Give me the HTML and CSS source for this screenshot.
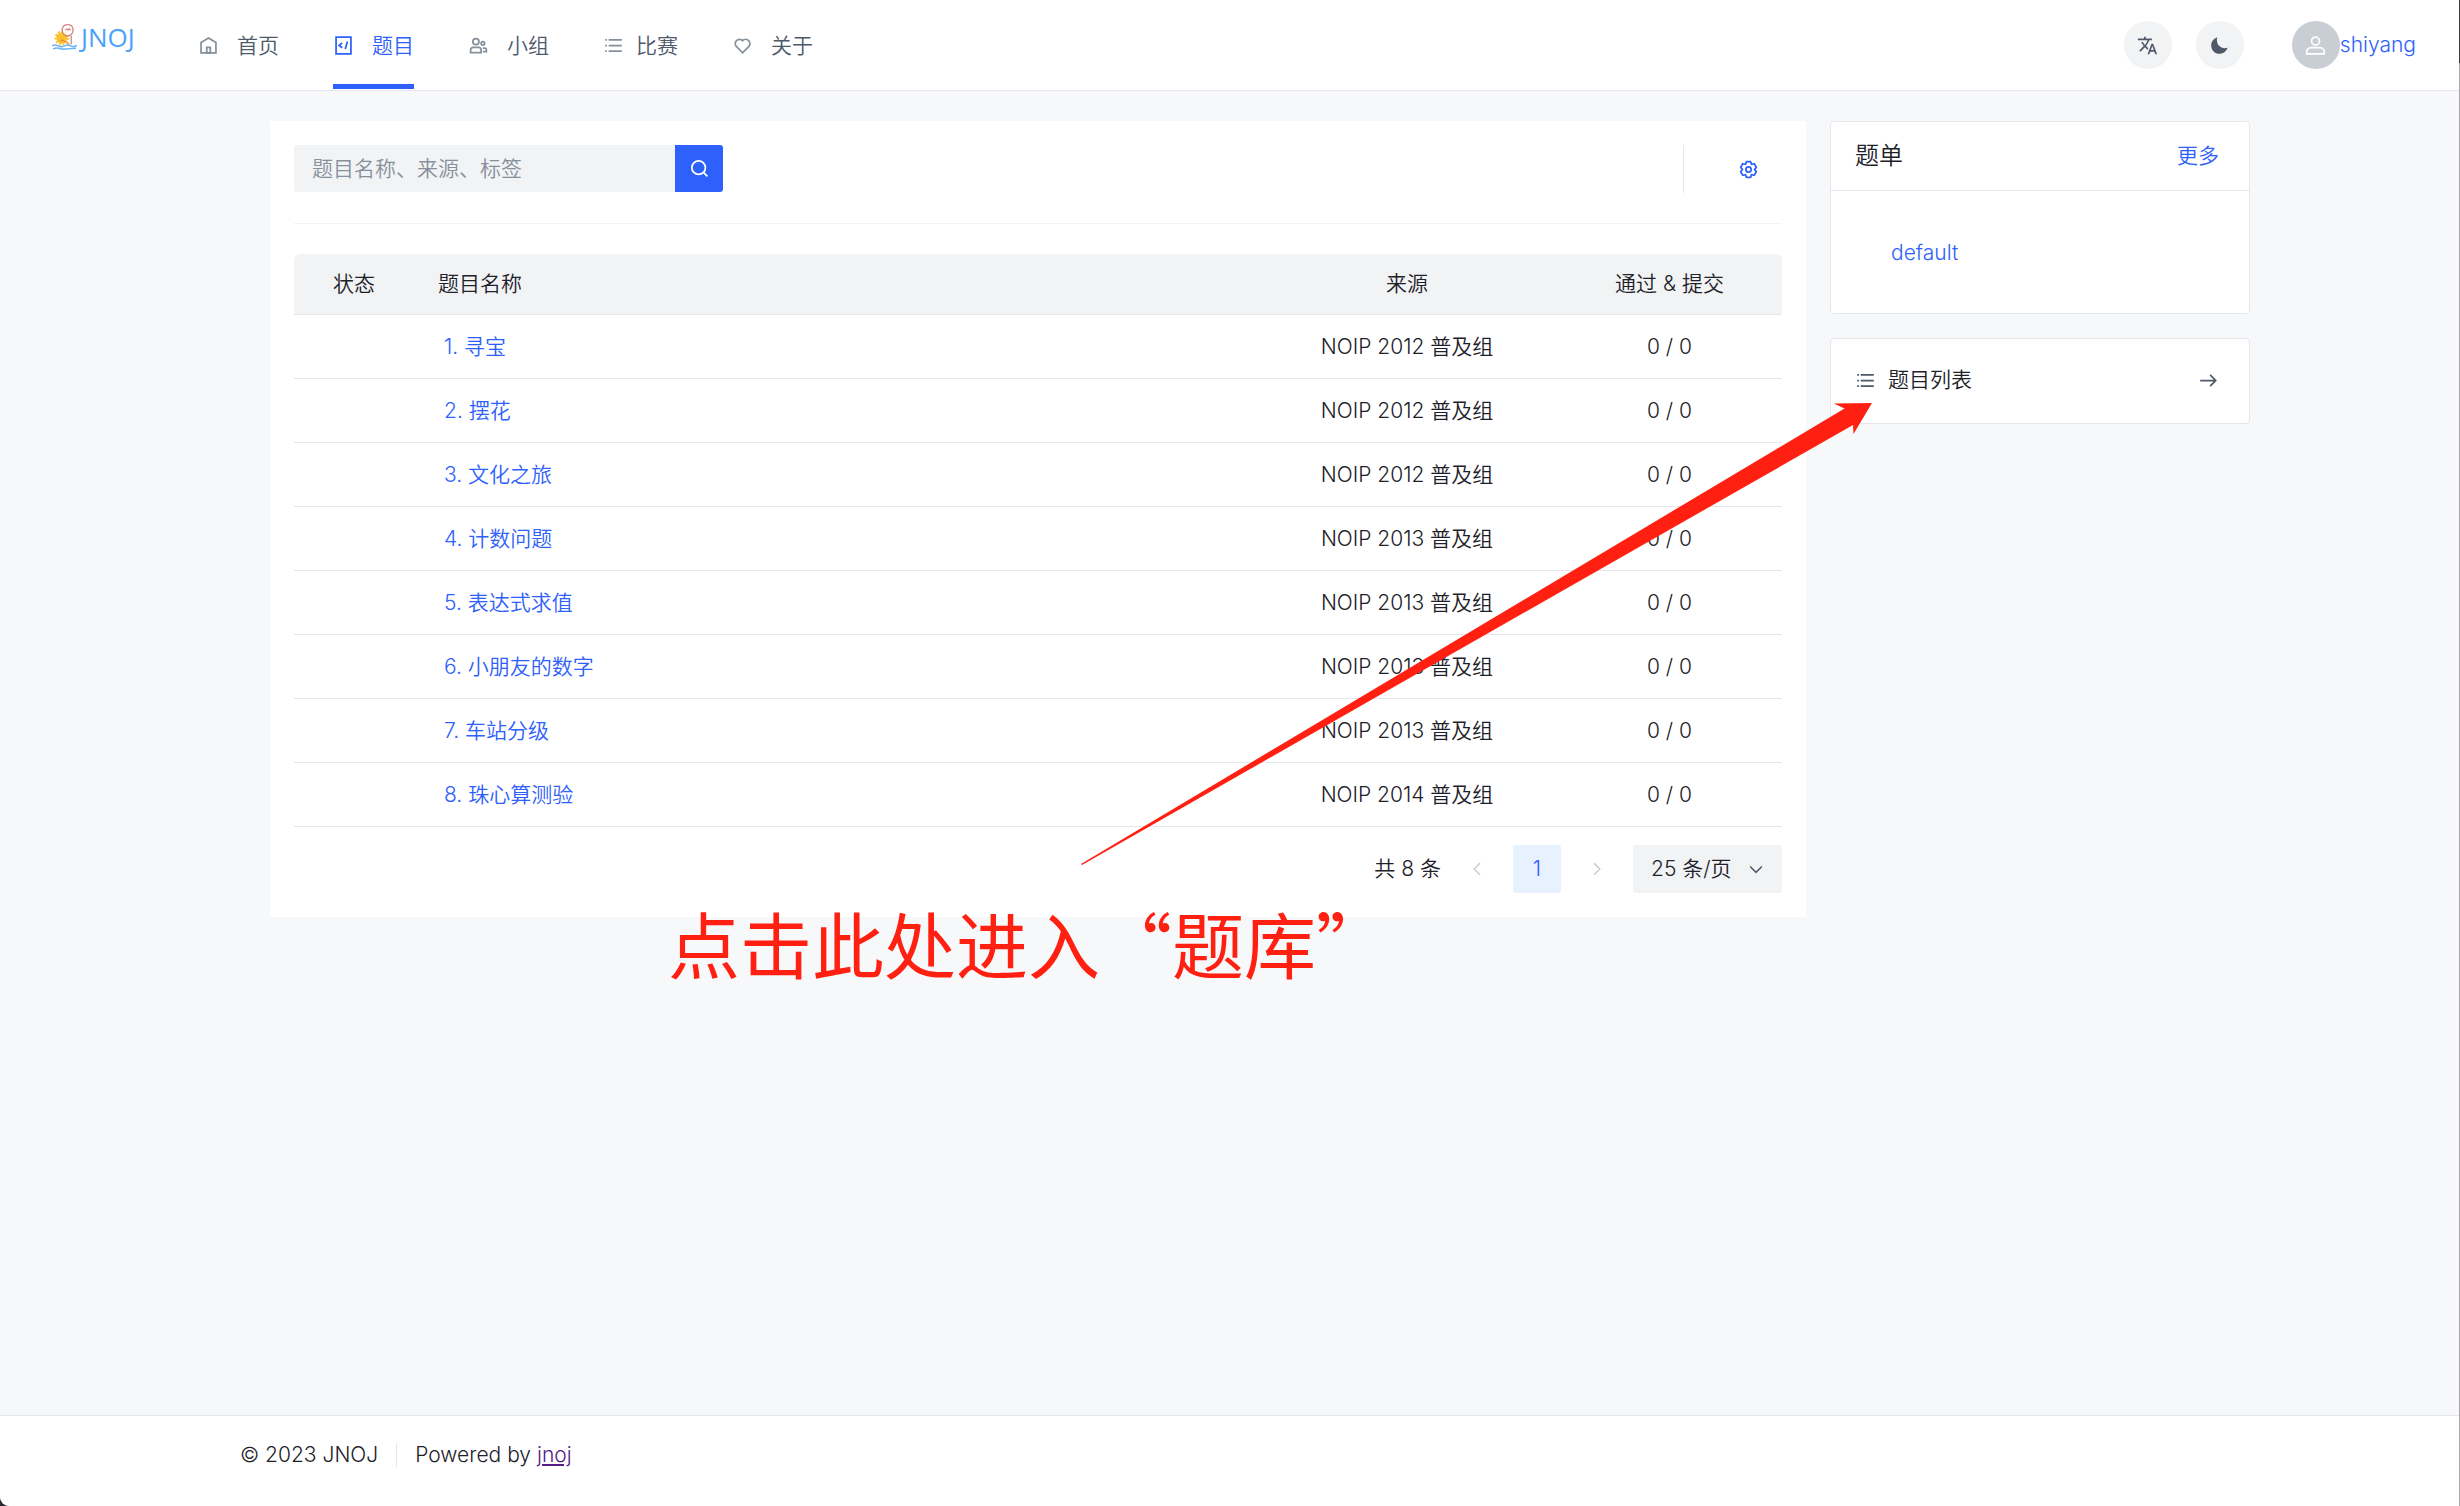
FILE: index.html
```html
<!DOCTYPE html>
<html lang="zh-CN">
<head>
<meta charset="utf-8">
<meta name="viewport" content="width=device-width, initial-scale=1">
<title>题目 - JNOJ</title>
<link rel="stylesheet" href="styles.css">
</head>
<body>
<svg class="sprite" aria-hidden="true">
  <symbol id="i-list" viewBox="0 0 48 48"><path d="M13 24h30M5 11h4m4 26h30M13 11h30M5 24h4M5 37h4"/></symbol>
  <symbol id="i-chev-l" viewBox="0 0 48 48"><path d="M32 8.400 16.444 23.956 32 39.513"/></symbol>
  <symbol id="i-chev-r" viewBox="0 0 48 48"><path d="m16 39.513 15.556-15.557L16 8.400"/></symbol>
</svg>
<header class="topbar">
  <a class="logo" href="#" aria-label="JNOJ">
    <svg class="logo-mark" viewBox="0 0 24 26" aria-hidden="true">
      <circle cx="9.500" cy="14" r="5.500" fill="#f9c22e"/>
      <circle cx="9.500" cy="14" r="6.200" fill="none" stroke="#f9c22e" stroke-width="1.600" stroke-dasharray="2 1.500"/>
      <path d="M10 8c-1-4 1-7 5-7s6 3 5 7c-1 3-3 4-5 4s-4-1-5-4zM18.500 12v8" fill="#fff" fill-opacity=".7" stroke="#d4827c" stroke-width="1.200"/>
      <path d="M12.500 6.500l2-1.500 1 1.500 1-1.500 1.500 1.500" fill="none" stroke="#d4827c"/>
      <path d="M8 17q2-2 4 0l5 3" fill="none" stroke="#e8913c" stroke-width="1.200"/>
      <path d="M0 21.500q3-1.500 6 0t6 0 6 0 6-.5M1 24.500q3-1.500 6-.5t6 .5 6-.5 4-.5" fill="none" stroke="#6bb5f3" stroke-width="1.500"/>
    </svg>
    <span class="logo-text">JNOJ</span>
  </a>
  <nav class="menu">
    <a href="#"><svg class="icon" viewBox="0 0 48 48"><path d="M7 17 24 7l17 10v24H7V17Z"/><path d="M20 28h8v13h-8V28Z"/></svg>首页</a>
    <a href="#" class="active"><svg class="icon" viewBox="0 0 48 48"><path d="M7 5h34v38H7z"/><path d="m21 18-7 6 7 5M33 15l-5 17M33 15l-5 17"/></svg>题目</a>
    <a href="#"><svg class="icon" viewBox="0 0 48 48"><circle cx="18" cy="15" r="7"/><circle cx="34" cy="19" r="4"/><path d="M6 34a6 6 0 0 1 6-6h12a6 6 0 0 1 6 6v6H6v-6ZM34 30h4a4 4 0 0 1 4 4v4h-8"/></svg>小组</a>
    <a href="#" class="tight"><svg class="icon"><use href="#i-list"/></svg>比赛</a>
    <a href="#"><svg class="icon" viewBox="0 0 48 48"><path d="M38.083 12.912a9.802 9.802 0 0 1 0 13.861l-1.732 1.733L24.228 40.630 12.100 28.500l-1.730-1.730A9.802 9.802 0 1 1 24.232 12.912a9.800 9.800 0 0 1 13.851 0Z"/></svg>关于</a>
  </nav>
  <div class="tools">
    <button class="round" type="button" aria-label="语言"><svg class="icon solid" viewBox="0 0 24 24"><path d="M12.870 15.070l-2.540-2.510.03-.03A17.520 17.520 0 0 0 14.070 6H17V4h-7V2H8v2H1v2h11.170C11.500 7.920 10.440 9.750 9 11.350 8.070 10.320 7.300 9.190 6.690 8h-2c.73 1.630 1.730 3.170 2.980 4.560l-5.090 5.020L4 19l5-5 3.110 3.110.76-2.040zM18.500 10h-2L12 22h2l1.120-3h4.750L21 22h2l-4.500-12zm-2.620 7l1.620-4.330L19.120 17h-3.240z"/></svg></button>
    <button class="round" type="button" aria-label="深色模式"><svg class="icon solid" viewBox="0 0 48 48"><path d="M42.108 29.769c.124-.387-.258-.736-.645-.613A17.990 17.990 0 0 1 36 30c-9.941 0-18-8.059-18-18 0-1.904.296-3.740.844-5.463.123-.387-.226-.768-.613-.645C10.558 8.334 5 15.518 5 24c0 10.493 8.507 19 19 19 8.482 0 15.666-5.558 18.108-13.231Z"/></svg></button>
    <a class="user" href="#"><span class="avatar"><svg class="icon" viewBox="0 0 48 48"><circle cx="24" cy="14" r="9"/><path d="M4 39a10 10 0 0 1 10-10h20a10 10 0 0 1 10 10v4H4v-4Z"/></svg></span>shiyang</a>
  </div>
</header>
<main class="page">
  <section class="panel">
    <div class="bar">
      <form class="search">
        <input type="search" aria-label="搜索题目" placeholder="题目名称、来源、标签">
        <button type="button" aria-label="搜索"><svg class="icon" viewBox="0 0 48 48"><circle cx="22" cy="22" r="15.500"/><path d="m33 33 9 9"/></svg></button>
      </form>
      <div class="settings"><button type="button" aria-label="设置"><svg class="icon" viewBox="0 0 48 48"><path d="M18.797 6.732A1 1 0 0 1 19.760 6h8.480a1 1 0 0 1 .964.732l1.285 4.628a1 1 0 0 0 1.213.700l4.651-1.200a1 1 0 0 1 1.116.468l4.240 7.344a1 1 0 0 1-.153 1.200L38.193 23.300a1 1 0 0 0 0 1.402l3.364 3.427a1 1 0 0 1 .153 1.200l-4.240 7.344a1 1 0 0 1-1.116.468l-4.650-1.200a1 1 0 0 0-1.214.700l-1.285 4.628a1 1 0 0 1-.964.732h-8.480a1 1 0 0 1-.963-.732L17.510 36.640a1 1 0 0 0-1.213-.700l-4.650 1.200a1 1 0 0 1-1.116-.468l-4.240-7.344a1 1 0 0 1 .153-1.200L9.809 24.700a1 1 0 0 0 0-1.402l-3.364-3.427a1 1 0 0 1-.153-1.200l4.240-7.344a1 1 0 0 1 1.116-.468l4.650 1.200a1 1 0 0 0 1.213-.700l1.286-4.628Z"/><circle cx="24" cy="24" r="6"/></svg></button></div>
    </div>
    <table class="problems">
      <colgroup><col class="c-status"><col><col class="c-source"><col class="c-count"></colgroup>
      <thead><tr><th>状态</th><th class="name">题目名称</th><th>来源</th><th>通过 &amp; 提交</th></tr></thead>
      <tbody>
        <tr><td></td><td class="name"><a href="#">1. 寻宝</a></td><td>NOIP 2012 普及组</td><td>0 / 0</td></tr>
        <tr><td></td><td class="name"><a href="#">2. 摆花</a></td><td>NOIP 2012 普及组</td><td>0 / 0</td></tr>
        <tr><td></td><td class="name"><a href="#">3. 文化之旅</a></td><td>NOIP 2012 普及组</td><td>0 / 0</td></tr>
        <tr><td></td><td class="name"><a href="#">4. 计数问题</a></td><td>NOIP 2013 普及组</td><td>0 / 0</td></tr>
        <tr><td></td><td class="name"><a href="#">5. 表达式求值</a></td><td>NOIP 2013 普及组</td><td>0 / 0</td></tr>
        <tr><td></td><td class="name"><a href="#">6. 小朋友的数字</a></td><td>NOIP 2013 普及组</td><td>0 / 0</td></tr>
        <tr><td></td><td class="name"><a href="#">7. 车站分级</a></td><td>NOIP 2013 普及组</td><td>0 / 0</td></tr>
        <tr><td></td><td class="name"><a href="#">8. 珠心算测验</a></td><td>NOIP 2014 普及组</td><td>0 / 0</td></tr>
      </tbody>
    </table>
    <div class="pager">
      <span>共 8 条</span>
      <div class="pages">
        <button type="button" disabled aria-label="上一页"><svg class="icon"><use href="#i-chev-l"/></svg></button>
        <button type="button" class="current">1</button>
        <button type="button" disabled aria-label="下一页"><svg class="icon"><use href="#i-chev-r"/></svg></button>
      </div>
      <div class="size">
        <select aria-label="每页条数"><option>25 条/页</option><option>50 条/页</option></select>
        <svg class="icon" viewBox="0 0 48 48"><path d="M39.600 17.443 24.043 33 8.487 17.443"/></svg>
      </div>
    </div>
  </section>
  <aside class="side">
    <section class="card">
      <div class="card-head"><h2>题单</h2><a href="#">更多</a></div>
      <div class="card-body"><a href="#">default</a></div>
    </section>
    <a class="card link-card" href="#">
      <svg class="icon"><use href="#i-list"/></svg><span>题目列表</span>
      <svg class="icon" viewBox="0 0 48 48"><path d="m27.728 11.270 12.728 12.730-12.728 12.728M5 24h34.295"/></svg>
    </a>
  </aside>
  <div class="note">
    <svg class="note-arrow" viewBox="0 0 792 462" aria-hidden="true"><path d="M0 461 763.500 5.500 753 0.500 791 0 772.500 31 772 22 1 462Z"/></svg>
    <p class="note-text">点击此处进入“题库”</p>
  </div>
</main>
<footer class="footer"><span>© 2023 JNOJ</span><span class="powered">Powered by <a href="#">jnoj</a></span></footer>
</body>
</html>
```
FILE: styles.css
```css
:root {
  --blue: #2e61fb;
  --text: #1d2129;
  --muted: #86909c;
  --gray: #4e5969;
  --line: #e5e6eb;
  --fill: #f2f3f5;
}

* { box-sizing: border-box; }

html { background: #2b2b30; }

body {
  display: flex;
  flex-direction: column;
  min-height: 100vh;
  margin: 0;
  border-bottom-left-radius: 9px;
  background: #f7f8fa;
  color: var(--text);
  font: 350 21px/32px Inter, "Noto Sans CJK SC", sans-serif;
}

/* Window edge */
body::after {
  content: "";
  position: fixed;
  inset: 0 0 0 auto;
  width: 1px;
  background: linear-gradient(#3c3c3c 63px, #a8a8a8 63px);
}

a { color: var(--blue); text-decoration: none; }

button, input, select {
  margin: 0;
  padding: 0;
  border: 0;
  border-radius: 0;
  background: none;
  color: inherit;
  font: inherit;
}

.sprite { display: none; }

.icon {
  display: block;
  flex: none;
  width: 21px;
  height: 21px;
  fill: none;
  stroke: currentColor;
  stroke-width: 4;
}

.icon.solid { fill: currentColor; stroke: none; }

/* Top bar */
.topbar {
  display: flex;
  align-items: center;
  height: 91px;
  padding: 0 44px 0 52px;
  border-bottom: 1px solid var(--line);
  background: #fff;
}

.logo {
  display: flex;
  align-items: center;
  align-self: flex-start;
  gap: 4px;
  width: 146px;
  padding-top: 23px;
}

.logo-mark { width: 25px; height: 28px; }

.logo-text {
  color: #4ba3fb;
  font: 400 26px/28px "Open Sans", sans-serif;
}

.menu { display: flex; align-self: stretch; gap: 54px; }

.menu a {
  display: flex;
  align-items: center;
  gap: 18px;
  border-bottom: 5px solid transparent;
  margin-bottom: 1px;
  padding-top: 7px;
  color: var(--gray);
}

.menu a.tight { gap: 12px; }
.menu .icon { color: var(--muted); }
.menu a.active { border-color: var(--blue); color: var(--blue); }
.menu .active .icon { color: var(--blue); }

.tools { display: flex; align-items: center; gap: 24px; margin-left: auto; }

.round, .avatar {
  display: grid;
  place-items: center;
  width: 48px;
  height: 48px;
  border-radius: 50%;
  background: var(--fill);
  color: var(--gray);
}

.user { display: flex; align-items: center; margin-left: 24px; }
.avatar { background: #c9cdd4; color: #fff; }

/* Page */
.page {
  position: relative;
  display: grid;
  grid-template-columns: minmax(0, 1fr) 420px;
  align-items: start;
  gap: 24px;
  flex: 1;
  padding: 30px 210px 48px 270px;
}

.panel { padding: 24px; background: #fff; }

.bar {
  display: flex;
  justify-content: space-between;
  padding-bottom: 30px;
  border-bottom: 1px solid var(--fill);
  margin-bottom: 30px;
}

.search { display: flex; width: 429px; height: 47px; }

.search input {
  flex: 1;
  min-width: 0;
  padding: 0 18px;
  border-radius: 3px 0 0 3px;
  background: var(--fill);
}

.search input::placeholder { color: var(--muted); opacity: 1; }

.search button {
  display: grid;
  place-items: center;
  width: 48px;
  border-radius: 0 3px 3px 0;
  background: var(--blue);
  color: #fff;
}

.settings {
  display: flex;
  align-items: center;
  height: 48px;
  padding: 0 23px 0 54px;
  border-left: 1px solid var(--line);
  color: var(--blue);
}

.problems {
  width: 100%;
  border-collapse: separate;
  border-spacing: 0;
  table-layout: fixed;
}

.c-status { width: 120px; }
.c-source { width: 300px; }
.c-count { width: 225px; }

.problems th, .problems td {
  height: 64px;
  padding: 0;
  border-bottom: 1px solid var(--line);
  font-weight: inherit;
  text-align: center;
}

.problems th { height: 61px; background: var(--fill); }
.problems th:first-child { border-top-left-radius: 6px; }
.problems th:last-child { border-top-right-radius: 6px; }
.problems .name { padding-left: 24px; text-align: left; }
.problems td.name { padding-left: 30px; }

.pager {
  display: flex;
  align-items: center;
  justify-content: flex-end;
  gap: 12px;
  padding-top: 18px;
}

.pages { display: flex; gap: 12px; }

.pages button {
  display: grid;
  place-items: center;
  width: 48px;
  height: 48px;
  border-radius: 3px;
}

.pages button:disabled { color: #c9cdd4; }
.pages .icon { width: 18px; height: 18px; }
.pages .current { background: #e8f1ff; color: var(--blue); }

.size {
  display: grid;
  align-items: center;
  width: 149px;
  height: 48px;
}

.size select, .size .icon { grid-area: 1 / 1; }

.size select {
  appearance: none;
  height: 48px;
  padding: 0 18px;
  border-radius: 3px;
  background: var(--fill);
}

.size .icon {
  justify-self: end;
  width: 18px;
  height: 18px;
  margin-right: 17px;
  color: var(--gray);
  pointer-events: none;
}

/* Side cards */
.side { display: grid; gap: 24px; }

.card {
  border: 1px solid var(--line);
  border-radius: 4px;
  background: #fff;
}

.card-head {
  display: flex;
  align-items: center;
  justify-content: space-between;
  height: 69px;
  padding: 0 30px 0 24px;
  border-bottom: 1px solid var(--line);
}

.card-head h2 { margin: 0; font-size: 24px; font-weight: 350; }
.card-body { padding: 46px 60px 44px; }

.link-card {
  display: flex;
  align-items: center;
  gap: 12px;
  height: 86px;
  padding: 0 30px 2px 24px;
  color: var(--text);
}

.link-card .icon { color: var(--gray); }
.link-card span { flex: 1; }

/* Annotation drawn over the page */
.note { position: absolute; top: 312px; left: 668px; color: #ff2012; pointer-events: none; }

.note-arrow {
  display: block;
  width: 792px;
  height: 462px;
  margin-left: 413px;
  fill: currentColor;
}

.note-text {
  margin: 23px 0 0;
  font: 400 72px/108px "Noto Sans CJK SC", sans-serif;
  white-space: nowrap;
}

/* Footer */
.footer {
  display: flex;
  align-items: center;
  height: 91px;
  padding: 0 240px 12px;
  border-top: 1px solid var(--line);
  border-bottom-left-radius: 9px;
  background: #fff;
}

.footer .powered {
  padding-left: 18px;
  border-left: 1px solid var(--line);
  margin-left: 18px;
  line-height: 24px;
}

.footer a { color: #551a8b; text-decoration: underline; }
```
